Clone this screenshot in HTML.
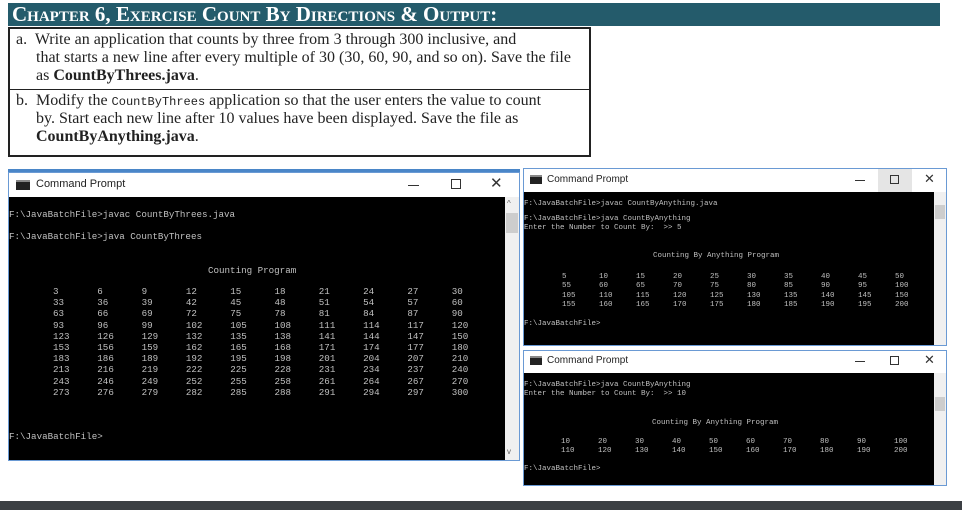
<!DOCTYPE html>
<html><head><meta charset="utf-8"><style>
*{margin:0;padding:0;box-sizing:border-box}
body{width:962px;height:510px;background:#fff;position:relative;overflow:hidden;font-family:"Liberation Sans",sans-serif}
.a{position:absolute;white-space:pre}
.hdr{left:8px;top:3px;width:932px;height:23px;background:#245b6b;color:#fff;font-family:"Liberation Serif",serif;font-weight:bold;font-size:21px;line-height:23px;padding-left:4px;font-variant:small-caps}
.box{left:8px;top:27px;width:583px;height:130px;border:2px solid #222;font-family:"Liberation Serif",serif;font-size:16px;color:#222}
.box div{position:absolute;white-space:pre}
.mono{font-family:"Liberation Mono",monospace;font-size:12px}
.win{background:#fff;border:1px solid #6a9ad4}
.con{background:#000;color:#c0c0c0;font-family:"Liberation Mono",monospace}
.ttl{font-size:11px;color:#222}
.sb{background:#f0f0f0}
</style></head><body>
<div class="a hdr">Chapter 6, Exercise Count By Directions &amp; Output:</div>
<div class="a box">
<div style="left:6px;top:2px">a.&nbsp; Write an application that counts by three from 3 through 300 inclusive, and</div>
<div style="left:26px;top:20px">that starts a new line after every multiple of 30 (30, 60, 90, and so on). Save the file</div>
<div style="left:26px;top:38px">as <b>CountByThrees.java</b>.</div>
<div style="left:0;top:60px;width:579px;border-top:1px solid #222"></div>
<div style="left:6px;top:63px">b.&nbsp; Modify the <span class="mono">CountByThrees</span> application so that the user enters the value to count</div>
<div style="left:26px;top:81px">by. Start each new line after 10 values have been displayed. Save the file as</div>
<div style="left:26px;top:99px"><b>CountByAnything.java</b>.</div>
</div>

<!-- left window -->
<div class="a" style="left:8px;top:169px;width:512px;height:3px;background:#4a86c8"></div>
<div class="a win" style="left:8px;top:172px;width:512px;height:289px"></div>
<div class="a" style="left:16px;top:180px;width:14px;height:10px;background:#222;border-top:2px solid #888"></div>
<div class="a ttl" style="left:36px;top:178px">Command Prompt</div>
<div class="a" style="left:408px;top:185px;width:11px;height:1px;background:#333"></div>
<div class="a" style="left:451px;top:179px;width:10px;height:10px;border:1px solid #333"></div>
<div class="a" style="left:490px;top:174px;font-size:15px;color:#333">✕</div>
<div class="a con" style="left:9px;top:197px;width:497px;height:263px"></div>
<div class="a sb" style="left:505px;top:197px;width:14px;height:263px"></div>
<div class="a" style="left:506px;top:213px;width:12px;height:20px;background:#cdcdcd"></div>
<div class="a" style="left:507px;top:199px;font-size:8px;color:#666">^</div>
<div class="a" style="left:507px;top:447px;font-size:8px;color:#666">v</div>

<!-- right top window -->
<div class="a win" style="left:523px;top:168px;width:424px;height:178px"></div>
<div class="a" style="left:878px;top:169px;width:34px;height:23px;background:#e5e5e5"></div>
<div class="a" style="left:530px;top:175px;width:12px;height:9px;background:#222;border-top:2px solid #888"></div>
<div class="a ttl" style="left:547px;top:174px;font-size:10px">Command Prompt</div>
<div class="a" style="left:855px;top:180px;width:10px;height:1px;background:#333"></div>
<div class="a" style="left:890px;top:175px;width:9px;height:9px;border:1px solid #333"></div>
<div class="a" style="left:924px;top:171px;font-size:13px;color:#333">✕</div>
<div class="a con" style="left:524px;top:192px;width:410px;height:153px"></div>
<div class="a sb" style="left:934px;top:192px;width:12px;height:153px"></div>
<div class="a" style="left:935px;top:205px;width:10px;height:14px;background:#cdcdcd"></div>

<!-- right bottom window -->
<div class="a win" style="left:523px;top:350px;width:424px;height:136px"></div>
<div class="a" style="left:530px;top:356px;width:12px;height:9px;background:#222;border-top:2px solid #888"></div>
<div class="a ttl" style="left:547px;top:355px;font-size:10px">Command Prompt</div>
<div class="a" style="left:855px;top:361px;width:10px;height:1px;background:#333"></div>
<div class="a" style="left:890px;top:356px;width:9px;height:9px;border:1px solid #333"></div>
<div class="a" style="left:924px;top:352px;font-size:13px;color:#333">✕</div>
<div class="a con" style="left:524px;top:373px;width:410px;height:112px"></div>
<div class="a sb" style="left:934px;top:373px;width:12px;height:112px"></div>
<div class="a" style="left:935px;top:397px;width:10px;height:14px;background:#cdcdcd"></div>

<div class="a" style="left:0;top:501px;width:962px;height:9px;background:#3c4044"></div>
<div id="out"></div>
<script>
var h='';
function t(x,y,s,fs){h+='<div class="a" style="left:'+x+'px;top:'+y+'px;font-family:Liberation Mono,monospace;font-size:'+fs+'px;color:#c0c0c0;line-height:1">'+s+'</div>';}
var F=9.2;
t(9,210,'F:\\JavaBatchFile&gt;javac CountByThrees.java',F);
t(9,232,'F:\\JavaBatchFile&gt;java CountByThrees',F);
t(208,266,'Counting Program',F);
for(var r=0;r<10;r++)for(var c=0;c<10;c++){t(53+c*44.3,287+r*11.2,String(3*(r*10+c+1)),F);}
t(9,432,'F:\\JavaBatchFile&gt;',F);
var f=7.5;
t(524,201,'F:\\JavaBatchFile&gt;javac CountByAnything.java',f);
t(524,216,'F:\\JavaBatchFile&gt;java CountByAnything',f);
t(524,225,'Enter the Number to Count By:  &gt;&gt; 5',f);
t(653,253,'Counting By Anything Program',f);
for(r=0;r<4;r++)for(c=0;c<10;c++)t(562+c*37,274+r*9.3,String(5*(r*10+c+1)),f);
t(524,321,'F:\\JavaBatchFile&gt;',f);
t(524,382,'F:\\JavaBatchFile&gt;java CountByAnything',f);
t(524,391,'Enter the Number to Count By:  &gt;&gt; 10',f);
t(652,420,'Counting By Anything Program',f);
for(r=0;r<2;r++)for(c=0;c<10;c++)t(561+c*37,439+r*9.3,String(10*(r*10+c+1)),f);
t(524,466,'F:\\JavaBatchFile&gt;',f);
document.getElementById('out').innerHTML=h;
</script>
</body></html>
